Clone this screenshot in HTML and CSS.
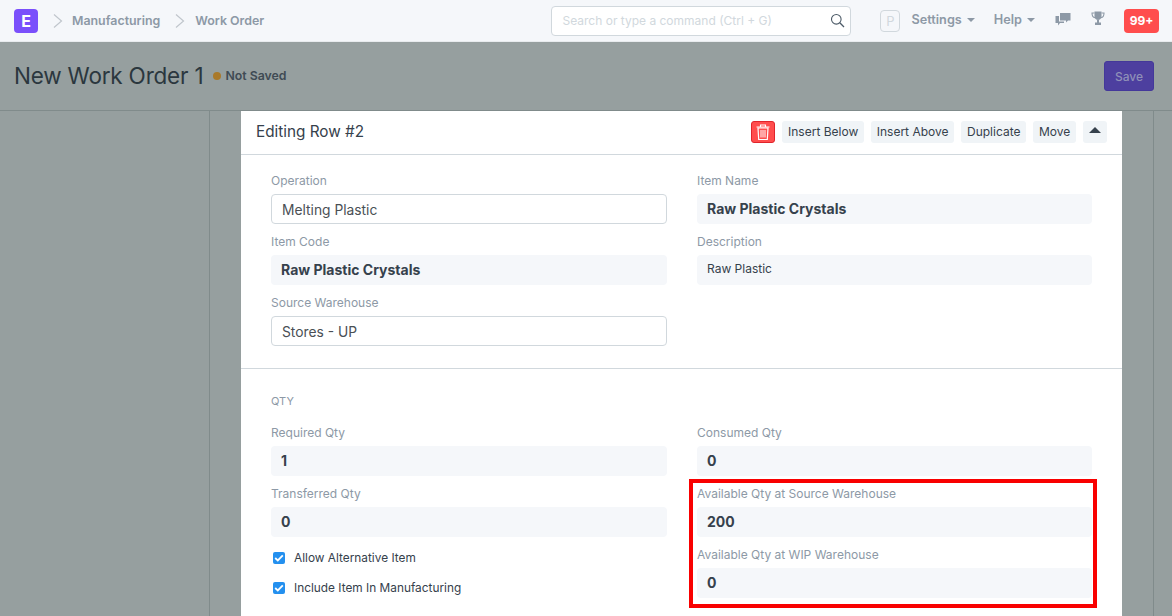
FILE: index.html

```html
<!DOCTYPE html>
<html lang="en">
<head>
  <meta charset="UTF-8">
  <title>New Work Order 1</title>
  <link rel="stylesheet" href="styles.css">
</head>
<body>

<!-- top navbar -->
<header class="navbar">
  <div class="logo">E</div>
  <svg class="crumb-arrow" width="12" height="16" viewBox="0 0 12 16"><path d="M2 1.5 L9.5 8 L2 14.5" fill="none" stroke="#c0c6cc" stroke-width="1.2"/></svg>
  <a class="crumb">Manufacturing</a>
  <svg class="crumb-arrow second" width="12" height="16" viewBox="0 0 12 16"><path d="M2 1.5 L9.5 8 L2 14.5" fill="none" stroke="#c0c6cc" stroke-width="1.2"/></svg>
  <a class="crumb">Work Order</a>

  <div class="search">
    <span>Search or type a command (Ctrl + G)</span>
    <svg width="15" height="15" viewBox="0 0 15 15"><circle cx="6.3" cy="6.3" r="4.8" fill="none" stroke="#4c5a67" stroke-width="1.1"/><path d="M9.8 9.8 L14 14" stroke="#4c5a67" stroke-width="1.3"/></svg>
  </div>

  <div class="avatar">P</div>
  <a class="nav-link settings">Settings<i class="caret"></i></a>
  <a class="nav-link help">Help<i class="caret"></i></a>
  <svg class="chat-icon" width="16" height="15" viewBox="0 0 16 15"><path d="M5 1 H15.5 V8.5 H13 L11 10.5 V8.5 H5 Z" fill="#8d99a6"/><path d="M0.5 4 H4 V9.5 H9 V11 H5 L3 13.5 V11 H0.5 Z" fill="#8d99a6"/></svg>
  <svg class="trophy-icon" width="14" height="15" viewBox="0 0 14 15"><path d="M3.5 0.5 H10.5 V5.5 C10.5 7.8 8.8 9 7 9 C5.2 9 3.5 7.8 3.5 5.5 Z" fill="#8d99a6"/><path d="M3.5 2 H1 C1 5 2 6.5 4 6.8 M10.5 2 H13 C13 5 12 6.5 10 6.8" fill="none" stroke="#8d99a6" stroke-width="1.1"/><path d="M6 9 H8 V11.5 H10 V14 H4 V11.5 H6 Z" fill="#8d99a6"/></svg>
  <div class="badge">99+</div>
</header>

<!-- page title -->
<div class="page-head">
  <h1>New Work Order 1</h1>
  <span class="dot"></span>
  <span class="status">Not Saved</span>
  <button class="save-btn">Save</button>
</div>

<main class="page-body">
  <div class="modal">
    <div class="modal-head">
      <h2>Editing Row #2</h2>
      <button class="del-btn">
        <svg width="14" height="16" viewBox="0 0 14 16"><path d="M0.5 3 H13.5 M4.5 3 V1 H9.5 V3" fill="none" stroke="#fff" stroke-width="1.1"/><path d="M2 4 H12 L11.3 15.5 H2.7 Z" fill="none" stroke="#fff" stroke-width="1.2"/><path d="M5 6 V13.5 M7 6 V13.5 M9 6 V13.5" stroke="#fff" stroke-width="1"/></svg>
      </button>
      <button class="row-btn">Insert Below</button>
      <button class="row-btn">Insert Above</button>
      <button class="row-btn">Duplicate</button>
      <button class="row-btn">Move</button>
      <button class="row-btn collapse"><i class="caret-up"></i></button>
    </div>

    <section class="form-section first">
      <div class="col">
        <div class="field"><label>Operation</label><div class="input">Melting Plastic</div></div>
        <div class="field"><label>Item Code</label><div class="value">Raw Plastic Crystals</div></div>
        <div class="field"><label>Source Warehouse</label><div class="input">Stores - UP</div></div>
      </div>
      <div class="col">
        <div class="field"><label>Item Name</label><div class="value">Raw Plastic Crystals</div></div>
        <div class="field"><label>Description</label><div class="value plain">Raw Plastic</div></div>
      </div>
    </section>

    <section class="form-section second">
      <div class="section-title">QTY</div>
      <div class="cols">
        <div class="col">
          <div class="field"><label>Required Qty</label><div class="value">1</div></div>
          <div class="field"><label>Transferred Qty</label><div class="value">0</div></div>
          <div class="checks">
            <div class="check"><i class="tick"><svg width="10" height="8" viewBox="0 0 10 8"><path d="M1.2 4 L3.8 6.4 L8.8 1.4" fill="none" stroke="#fff" stroke-width="1.8"/></svg></i>Allow Alternative Item</div>
            <div class="check"><i class="tick"><svg width="10" height="8" viewBox="0 0 10 8"><path d="M1.2 4 L3.8 6.4 L8.8 1.4" fill="none" stroke="#fff" stroke-width="1.8"/></svg></i>Include Item In Manufacturing</div>
          </div>
        </div>
        <div class="col">
          <div class="field"><label>Consumed Qty</label><div class="value">0</div></div>
          <div class="highlight">
            <div class="field"><label>Available Qty at Source Warehouse</label><div class="value">200</div></div>
            <div class="field"><label>Available Qty at WIP Warehouse</label><div class="value">0</div></div>
          </div>
        </div>
      </div>
    </section>
  </div>
</main>

</body>
</html>
```

FILE: styles.css

```css
* {
  box-sizing: border-box;
}
html, body {
  height: 100%;
}
body {
  margin: 0;
  height: 100vh;
  overflow: hidden;
  display: flex;
  flex-direction: column;
  background: #969f9f;
  color: #36414c;
  font-family: Inter, "Noto Sans", sans-serif;
  font-size: 13px;
}

/* navbar */
.navbar {
  height: 42px;
  flex: none;
  display: flex;
  align-items: center;
  background: #f5f7fa;
  border-bottom: 1px solid #e8ebee;
  padding-left: 14px;
}
.logo {
  width: 24px;
  height: 24px;
  border-radius: 4px;
  background: #7a4ffb;
  color: #fff;
  font-weight: 700;
  font-size: 16px;
  display: flex;
  align-items: center;
  justify-content: center;
}
.crumb-arrow {
  margin-left: 14px;
  margin-right: 8px;
}
.crumb-arrow.second {
  margin-left: 14px;
  margin-right: 9px;
}
.crumb {
  color: #8d99a6;
  font-weight: 600;
  font-size: 12.4px;
}
.search {
  width: 300px;
  height: 30px;
  margin-left: auto;
  background: #fff;
  border: 1px solid #d1d8dd;
  border-radius: 4px;
  display: flex;
  align-items: center;
  justify-content: space-between;
  padding: 0 5px 0 10px;
  color: #d1d8dd;
  font-size: 12px;
}
.avatar {
  width: 20px;
  height: 22px;
  margin-left: 29px;
  border: 1px solid #d1d8dd;
  border-radius: 4px;
  color: #d1d8dd;
  font-size: 13px;
  display: flex;
  align-items: center;
  justify-content: center;
}
.nav-link {
  color: #8d99a6;
  font-weight: 600;
  font-size: 12.7px;
  display: flex;
  align-items: center;
  margin-top: -3px;
}
.settings {
  margin-left: 11px;
}
.help {
  margin-left: 19px;
}
.caret {
  margin-left: 5px;
  margin-top: 2px;
  border-left: 4px solid transparent;
  border-right: 4px solid transparent;
  border-top: 4px solid #8d99a6;
}
.chat-icon {
  margin-left: 20px;
  margin-top: -3px;
}
.trophy-icon {
  margin-left: 20px;
  margin-top: -5px;
}
.badge {
  width: 35px;
  height: 24px;
  margin-left: 19px;
  margin-right: 13px;
  background: #ff4d4d;
  color: #fff;
  border-radius: 4px;
  font-weight: 700;
  font-size: 12px;
  display: flex;
  align-items: center;
  justify-content: center;
}

/* page head */
.page-head {
  height: 69px;
  flex: none;
  display: flex;
  align-items: center;
  padding: 0 18px 0 14px;
  border-bottom: 1px solid #808b8b;
}
.page-head h1 {
  margin: 0 0 2px;
  font-size: 22.5px;
  font-weight: 400;
  color: #2b373e;
  letter-spacing: -0.2px;
}
.dot {
  width: 8px;
  height: 8px;
  border-radius: 50%;
  background: #a9792a;
  margin-left: 10px;
}
.status {
  margin-left: 4px;
  margin-bottom: 1px;
  font-size: 12.3px;
  font-weight: 600;
  color: #3f4b54;
}
.save-btn {
  margin-left: auto;
  width: 50px;
  height: 30px;
  background: #4d3f9f;
  border: 1px solid #44389a;
  border-radius: 3px;
  color: #8f90b8;
  font-family: inherit;
  font-size: 12px;
  font-weight: 500;
}

/* page body with the form column showing behind the dialog */
.page-body {
  flex: 1;
  min-height: 0;
  width: 945px;
  margin-left: 209px;
  padding: 0 31px;
  border-left: 1px solid #808b8b;
  border-right: 1px solid #808b8b;
}
.modal {
  width: 881px;
  height: 100%;
  background: #fff;
}
.modal-head {
  height: 44px;
  display: flex;
  align-items: center;
  gap: 7px;
  padding: 0 15px 2px;
  border-bottom: 1px solid #d1d8dd;
}
.modal-head h2 {
  margin: 0 auto 0 0;
  font-size: 15.3px;
  font-weight: 400;
  color: #36414c;
}
.del-btn {
  width: 24px;
  height: 22px;
  padding: 0;
  background: #ff4d4d;
  border: 1px solid #e0242b;
  border-radius: 3px;
  display: flex;
  align-items: center;
  justify-content: center;
}
.row-btn {
  height: 22px;
  padding: 0 5.75px;
  background: #f0f4f7;
  border: none;
  border-radius: 3px;
  color: #36414c;
  font-family: inherit;
  font-size: 12px;
}
.collapse {
  width: 24px;
  display: flex;
  align-items: center;
  justify-content: center;
}
.caret-up {
  border-left: 6px solid transparent;
  border-right: 6px solid transparent;
  border-top: none;
  border-bottom: 6px solid #36414c;
  margin-bottom: 3px;
}

/* form */
.form-section {
  padding: 18px 30px 12px;
}
.form-section.first {
  display: grid;
  grid-template-columns: 396px 395px;
  column-gap: 30px;
  border-bottom: 1px solid #d1d8dd;
}
.form-section.second {
  padding-top: 24px;
}
.section-title {
  height: 16px;
  line-height: 16px;
  margin-bottom: 16px;
  font-size: 11px;
  color: #8d99a6;
}
.cols {
  display: grid;
  grid-template-columns: 396px 395px;
  column-gap: 30px;
}
.field {
  margin-bottom: 10px;
}
.field label {
  display: block;
  height: 16px;
  line-height: 16px;
  margin-bottom: 5px;
  font-size: 12px;
  color: #8d99a6;
}
.input, .value {
  height: 30px;
  display: flex;
  align-items: center;
  border-radius: 4px;
}
.input {
  padding: 1px 10px 0;
  background: #fff;
  border: 1px solid #d1d8dd;
  font-size: 13.8px;
  color: #4a4f55;
}
.value {
  padding: 0 10px 1px;
  background: #f5f7fa;
  font-size: 14px;
  font-weight: 700;
  color: #36414c;
}
.value.plain {
  padding-bottom: 4px;
  font-size: 12px;
  font-weight: 400;
}
.checks {
  margin-top: -4px;
}
.check {
  height: 30px;
  display: flex;
  align-items: center;
  font-size: 11.85px;
  color: #36414c;
}
.tick {
  width: 12px;
  height: 12px;
  margin: 0 9px 0 2px;
  border-radius: 2px;
  background: #2490ef;
  display: flex;
  align-items: center;
  justify-content: center;
}

/* red annotation round the two warehouse fields */
.highlight {
  position: relative;
}
.highlight::after {
  content: "";
  position: absolute;
  top: -7px;
  right: -5px;
  bottom: -10px;
  left: -8px;
  border: 4px solid #f90000;
}
```
